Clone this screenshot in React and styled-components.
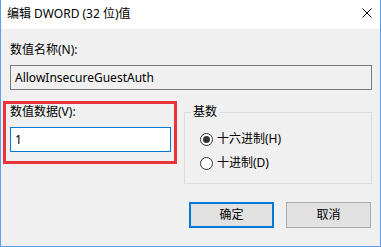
import React from "react";
import styled, { createGlobalStyle } from "styled-components";

const Global = createGlobalStyle`
  html, body { margin: 0; padding: 0; background: #f0f0f0; }
  * { box-sizing: border-box; }
`;

const FONT = `"Noto Sans", "Noto Sans CJK SC", sans-serif`;

const Window = styled.div`
  width: 381px;
  height: 247px;
  display: flex;
  flex-direction: column;
  background: #f0f0f0;
  border: 1px solid #5b9fea;
  border-top: none;
  font-family: ${FONT};
  font-size: 12px;
  line-height: 16px;
  color: #000;
  overflow: hidden;
`;

const TitleBar = styled.div`
  height: 29px;
  flex: none;
  background: #fff;
  display: flex;
  align-items: center;
  justify-content: space-between;
  padding: 0 8px 1px 6px;
`;

const Title = styled.span`
  font-size: 12px;
  white-space: nowrap;
`;

const Close = styled.svg`
  width: 10px;
  height: 10px;
  margin-top: -2px;
`;

const Body = styled.div`
  flex: 1;
  display: flex;
  flex-direction: column;
  padding: 13px 8px 0 9px;
`;

const Label = styled.div`
  height: 16px;
  white-space: nowrap;
`;

const TextBox = styled.div`
  height: 25px;
  margin-top: 7px;
  display: flex;
  align-items: center;
  padding: 0 4px;
  border: 1px solid ${(p) => (p.$focused ? "#0078d7" : "#7a7a7a")};
  background: ${(p) => (p.$focused ? "#fff" : "#f0f0f0")};
  white-space: nowrap;
`;

const Row = styled.div`
  display: flex;
  align-items: flex-start;
  margin-top: 11px;
`;

const Highlight = styled.div`
  width: 174px;
  flex: none;
  margin-left: -7px;
  border: 3px solid #e8333b;
  padding: 0 3px 9px 4px;
`;

const Group = styled.div`
  position: relative;
  flex: 1;
  margin-left: 7px;
  margin-top: 11px;
  height: 72px;
  border: 1px solid #dcdcdc;
  display: flex;
  flex-direction: column;
  gap: 8px;
  padding: 18px 0 0 15px;
`;

const Legend = styled.span`
  position: absolute;
  left: 6px;
  top: -9px;
  padding: 0 2px;
  background: #f0f0f0;
  line-height: 16px;
`;

const RadioRow = styled.div`
  display: flex;
  align-items: center;
  gap: 4px;
  height: 16px;
`;

const RadioCircle = styled.span`
  width: 13px;
  height: 13px;
  border-radius: 50%;
  border: 1px solid #333;
  background: #fff;
  display: flex;
  align-items: center;
  justify-content: center;
  &::after {
    content: "";
    width: 7px;
    height: 7px;
    border-radius: 50%;
    background: ${(p) => (p.$checked ? "#333" : "transparent")};
  }
`;

const Buttons = styled.div`
  display: flex;
  justify-content: flex-end;
  gap: 12px;
  margin-top: 18px;
  margin-right: 1px;
`;

const Button = styled.div`
  width: 85px;
  height: 26px;
  display: flex;
  align-items: center;
  justify-content: center;
  background: #e1e1e1;
  border: ${(p) => (p.$default ? "2px solid #0078d7" : "1px solid #adadad")};
`;

function Radio({ checked, children }) {
  return (
    <RadioRow>
      <RadioCircle $checked={checked} />
      <span>{children}</span>
    </RadioRow>
  );
}

export default function App() {
  return (
    <>
      <Global />
      <Window>
        <TitleBar>
          <Title>编辑 DWORD (32 位)值</Title>
          <Close viewBox="0 0 10 10">
            <path d="M0.5 0.5 L9.5 9.5 M9.5 0.5 L0.5 9.5" stroke="#000" strokeWidth="1" fill="none" />
          </Close>
        </TitleBar>
        <Body>
          <Label>数值名称(N):</Label>
          <TextBox>AllowInsecureGuestAuth</TextBox>
          <Row>
            <Highlight>
              <Label>数值数据(V):</Label>
              <TextBox $focused>1</TextBox>
            </Highlight>
            <Group>
              <Legend>基数</Legend>
              <Radio checked>十六进制(H)</Radio>
              <Radio>十进制(D)</Radio>
            </Group>
          </Row>
          <Buttons>
            <Button $default>确定</Button>
            <Button>取消</Button>
          </Buttons>
        </Body>
      </Window>
    </>
  );
}
